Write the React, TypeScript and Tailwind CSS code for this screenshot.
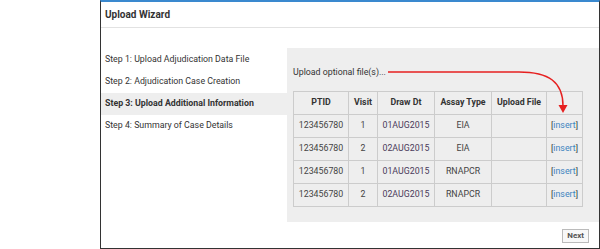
import React from "react";

const rows = [
  { ptid: "123456780", visit: "1", dt: "01AUG2015", assay: "EIA" },
  { ptid: "123456780", visit: "2", dt: "02AUG2015", assay: "EIA" },
  { ptid: "123456780", visit: "1", dt: "01AUG2015", assay: "RNAPCR" },
  { ptid: "123456780", visit: "2", dt: "02AUG2015", assay: "RNAPCR" },
];

export default function App() {
  return (
    <div
      className="w-[600px] h-[249px] bg-white flex text-[#333]"
      style={{ fontFamily: "Roboto, 'Liberation Sans', sans-serif" }}
    >
      <div className="w-[100px] shrink-0" />
      <div className="w-[500px] h-[249px] flex flex-col border-l border-r border-b border-[#333] border-t-2 border-t-[#3a89cf]">
        <div className="h-[26px] shrink-0 flex items-center pl-[4px] text-[10px] font-bold border-b border-[#e2e2e2]">
          Upload Wizard
        </div>
        <div className="flex pt-[20px]">
          <div className="w-[186px] shrink-0 pt-[1px] text-[8.8px]">
            <div className="h-[22px] flex items-center pl-[4px]">Step 1: Upload Adjudication Data File</div>
            <div className="h-[22px] flex items-center pl-[4px]">Step 2: Adjudication Case Creation</div>
            <div className="h-[22px] flex items-center pl-[4px] font-bold bg-[#eeeeee]">Step 3: Upload Additional Information</div>
            <div className="h-[22px] flex items-center pl-[4px]">Step 4: Summary of Case Details</div>
          </div>
          <div className="relative flex-1 h-[174px] bg-[#eeeeee] pl-[6px] pt-[18px]">
            <div className="h-[14px] flex items-center text-[8.8px]">Upload optional file(s)...</div>
            <svg className="absolute left-0 top-0" width="311" height="80" viewBox="0 0 311 80">
              <path d="M101 24 L232 24 C262 24 276 34 276 58" fill="none" stroke="#e62020" strokeWidth="1.5" />
              <polygon points="271.5,57 280.5,57 276,65" fill="#e62020" />
            </svg>
            <table className="mt-[11px] border-collapse text-[8.8px] text-center">
              <thead>
                <tr className="h-[23px] font-bold">
                  <th className="w-[55px] border border-[#cccccc]">PTID</th>
                  <th className="w-[29px] border border-[#cccccc]">Visit</th>
                  <th className="w-[57px] border border-[#cccccc]">Draw Dt</th>
                  <th className="w-[57px] border border-[#cccccc]">Assay Type</th>
                  <th className="w-[55px] border border-[#cccccc]">Upload File</th>
                  <th className="w-[36px] border border-[#cccccc]"></th>
                </tr>
              </thead>
              <tbody>
                {rows.map((r, i) => (
                  <tr key={i} className="h-[23px]">
                    <td className="border border-[#cccccc] text-[#444]">{r.ptid}</td>
                    <td className="border border-[#cccccc] text-[#444]">{r.visit}</td>
                    <td className="border border-[#cccccc] text-[#4a3a5a]">{r.dt}</td>
                    <td className="border border-[#cccccc] text-[#444]">{r.assay}</td>
                    <td className="border border-[#cccccc]"></td>
                    <td className="border border-[#cccccc]">
                      [<span className="text-[#3d83c0]">insert</span>]
                    </td>
                  </tr>
                ))}
              </tbody>
            </table>
          </div>
        </div>
        <div className="flex-1 flex justify-end items-start pt-[7px] pr-[10px]">
          <button className="h-[14px] px-[4px] text-[8px] font-bold text-[#555] bg-[#f8f8f8] border border-[#bbbbbb] leading-none">
            Next
          </button>
        </div>
      </div>
    </div>
  );
}
